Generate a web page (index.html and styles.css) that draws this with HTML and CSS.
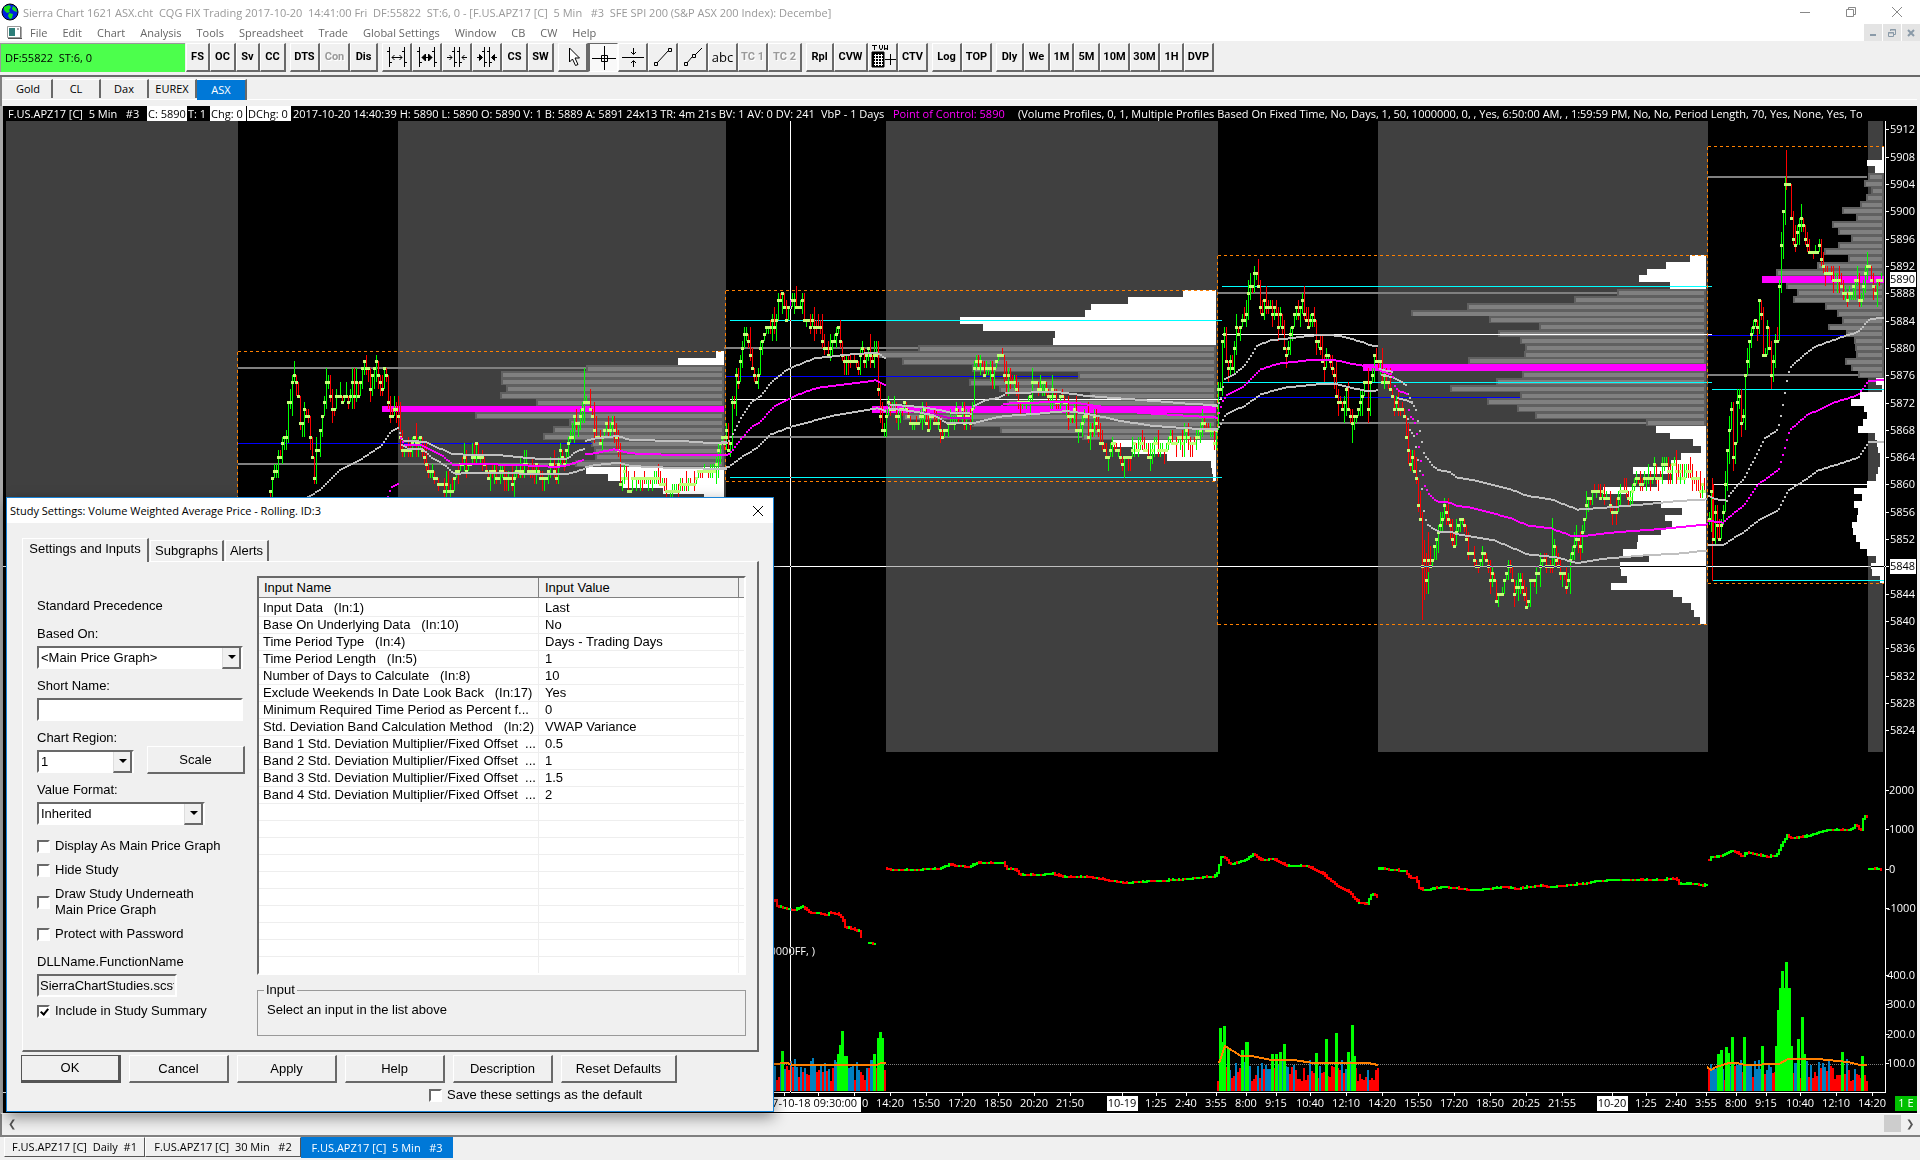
FILE: index.html
```html
<!DOCTYPE html>
<html lang="en">
<head>
<meta charset="utf-8">
<title>Sierra Chart 1621 ASX.cht</title>
<link rel="stylesheet" href="styles.css">
</head>
<body>
<header class="titlebar">
  <svg class="globe" width="18" height="18" viewBox="0 0 18 18"><circle cx="9" cy="9" r="8" fill="#0020e0" stroke="#000"/><path d="M3 4l5-2 2 2-2 3 1 2-3 1-3-3zM8 10l4 1-1 4-2 1-2-3zM12 3l3 2 1 4-3-1-2-2z" fill="#18e018"/></svg>
  <h1 class="caption">Sierra Chart 1621 ASX.cht&nbsp; CQG FIX Trading 2017-10-20&nbsp; 14:41:00 Fri&nbsp; DF:55822&nbsp; ST:6, 0 - [F.US.APZ17 [C]&nbsp; 5 Min&nbsp;&nbsp; #3&nbsp; SFE SPI 200 (S&amp;P ASX 200 Index): Decembe]</h1>
  <div class="winbtns">
    <button class="winbtn" aria-label="Minimize"><svg width="12" height="12"><path d="M1 6.5h10" stroke="#888"/></svg></button>
    <button class="winbtn" aria-label="Restore"><svg width="12" height="12" fill="none" stroke="#888"><path d="M1.500 3.500h7v7h-7zM3.500 3.500v-2h7v7h-2"/></svg></button>
    <button class="winbtn" aria-label="Close"><svg width="12" height="12" stroke="#888"><path d="M1 1l10 10M11 1L1 11"/></svg></button>
  </div>
</header>
<nav class="menubar">
  <svg width="16" height="13" viewBox="0 0 16 13"><path d="M.5 .5h13v11H.5z" fill="#fff" stroke="#999"/><path d="M2 2h6v8H2z" fill="#2c7d78"/><path d="M10 3h2M14 1v12M1 12.500h14" stroke="#555"/></svg>
  <a href="#">File</a><a href="#">Edit</a><a href="#">Chart</a><a href="#">Analysis</a><a href="#">Tools</a><a href="#">Spreadsheet</a><a href="#">Trade</a><a href="#">Global Settings</a><a href="#">Window</a><a href="#">CB</a><a href="#">CW</a><a href="#">Help</a>
  <div class="mdibtns">
    <button aria-label="Minimize chart"><svg width="10" height="10"><path d="M2 7h6" stroke="#8a9aa8" stroke-width="2"/></svg></button>
    <button aria-label="Restore chart"><svg width="10" height="10" fill="none" stroke="#8a9aa8"><path d="M1.500 4.500h5v4h-5zM1 5h6M3.500 3V1.500h5v5H7M3 2h6"/></svg></button>
    <button aria-label="Close chart"><svg width="10" height="10"><path d="M2 2l6 6M8 2l-6 6" stroke="#8a9aa8" stroke-width="2"/></svg></button>
  </div>
</nav>
<div class="toolbar">
  <div class="feed">DF:55822&nbsp; ST:6, 0</div>
  <div class="group"><button class="tb w24">FS</button><button class="tb w26">OC</button><button class="tb w24">Sv</button><button class="tb w26">CC</button></div>
  <div class="group"><button class="tb w30">DTS</button><button class="tb w30" disabled>Con</button><button class="tb w28">Dis</button></div>
  <div class="group">
    <button class="tb w30" aria-label="Widen bars"><svg width="20" height="20" fill="none" stroke="#000"><path d="M2.500 0v20M0 4.500h2M3 15.500h2M17.500 0v20M15 4.500h2M18 15.500h2M5 10.500h10M7.500 8L5 10.500 7.500 13M12.500 8l2.500 2.500-2.500 2.500"/></svg></button>
    <button class="tb w30" aria-label="Widen bars more"><svg width="20" height="20" fill="none" stroke="#000"><path d="M2.500 0v20M0 4.500h2M3 15.500h2M17.500 0v20M15 4.500h2M18 15.500h2M5 10.500h10"/><path d="M8.500 7L5 10.500 8.500 14zM11.500 7l3.500 3.500-3.500 3.500z" fill="#000"/></svg></button>
    <button class="tb w30" aria-label="Narrow bars"><svg width="20" height="20" fill="none" stroke="#000"><path d="M7.500 0v20M5 4.500h2M8 15.500h2M12.500 0v20M10 4.500h2M13 15.500h2M0 10.500h5M2.500 8L5 10.500 2.500 13M20 10.500h-5M17.500 8L15 10.500l2.500 2.500"/></svg></button>
    <button class="tb w30" aria-label="Narrow bars more"><svg width="20" height="20" fill="none" stroke="#000"><path d="M7.500 0v20M5 4.500h2M8 15.500h2M12.500 0v20M10 4.500h2M13 15.500h2M0 10.500h5M20 10.500h-5"/><path d="M2.500 7.500L5.500 10.500l-3 3zM17.500 7.500l-3 3 3 3z" fill="#000"/></svg></button>
    <button class="tb w26">CS</button><button class="tb w26">SW</button>
  </div>
  <div class="group">
    <button class="tb w30" aria-label="Pointer"><svg width="20" height="22"><path d="M6.500 2v14l3-3 3 6.500 2.500-1-3-6.500h4.500z" fill="#fff" stroke="#000"/></svg></button>
    <button class="tb w30 pressed" aria-label="Crosshair"><svg width="26" height="26" fill="none" stroke="#000"><path d="M13.500 1v24M1 13.500h24M10.500 10.500h6v6h-6z"/></svg></button>
    <button class="tb w30" aria-label="Horizontal level"><svg width="26" height="22" fill="none" stroke="#000"><path d="M2 11.500h22M13.500 2v6M11 6l2.500 2.500L16 6M13.500 21v-6M11 17l2.500-2.500L16 17"/></svg></button>
    <button class="tb w30" aria-label="Line"><svg width="20" height="20" fill="none" stroke="#000"><path d="M1.500 15.500h3v3h-3zM4 16L15 4M15.500 1.500h3v3h-3z"/></svg></button>
    <button class="tb w30" aria-label="Ray"><svg width="20" height="20" fill="none" stroke="#000"><path d="M1.500 15.500h3v3h-3zM4 16l5-6M12 8l7-7M9.500 7.500h3v3h-3z"/></svg></button>
    <button class="tb w30 plain">abc</button><button class="tb w30" disabled>TC 1</button><button class="tb w34" disabled>TC 2</button>
  </div>
  <div class="group">
    <button class="tb w28">Rpl</button><button class="tb w34">CVW</button>
    <button class="tb w30" aria-label="TVW"><svg width="26" height="26" fill="none" stroke="#000"><path d="M2 1.500h5M4.500 2v4M9.500 1v3l1.500 2 1.500-2V1M14.500 1v5l1.500-2 1.500 2V1"/><path d="M2 8h12v15H2z" fill="#000"/><path d="M4 11.500h9M4 14.500h9M4 17.500h9M4 20.500h9M5.500 10v12M8.500 10v12M11.500 10v12" stroke="#fff"/><path d="M15 15.500h11M20.500 10v11"/></svg></button>
    <button class="tb w30">CTV</button>
  </div>
  <div class="group"><button class="tb w30">Log</button><button class="tb w30">TOP</button></div>
  <div class="group"><button class="tb w28">Dly</button><button class="tb w26">We</button><button class="tb w24">1M</button><button class="tb w26">5M</button><button class="tb w30">10M</button><button class="tb w30">30M</button><button class="tb w24">1H</button><button class="tb w30">DVP</button></div>
</div>
<div class="tabs">
  <button class="tab">Gold</button><button class="tab">CL</button><button class="tab">Dax</button><button class="tab">EUREX</button><button class="tab on">ASX</button>
</div>
<main class="chartwin">
  <div class="info">
    <span class="i-sym">F.US.APZ17 [C]&nbsp; 5 Min&nbsp;&nbsp; #3</span><span class="i-c inv">C: 5890</span><span class="i-t">T: 1</span><span class="i-chg inv">Chg: 0</span><span class="i-dchg inv">DChg: 0</span><span class="i-bar">2017-10-20 14:40:39 H: 5890 L: 5890 O: 5890 V: 1 B: 5889 A: 5891 24x13 TR: 4m 21s BV: 1 AV: 0 DV: 241</span><span class="i-vbp">VbP - 1 Days</span><span class="i-poc">Point of Control: 5890</span><span class="i-rest">(Volume Profiles, 0, 1, Multiple Profiles Based On Fixed Time, No, Days, 1, 50, 1000000, 0, , Yes, 6:50:00 AM, , 1:59:59 PM, No, No, Period Length, 70, Yes, None, Yes, To</span>
  </div>
  <svg class="chart" id="chart" viewBox="3 121 1914 992" preserveAspectRatio="xMinYMin meet"></svg>
</main>
<div class="scroll"><span>&#10094;</span><i></i><span>&#10095;</span></div>
<footer class="books">
  <button class="book">F.US.APZ17 [C]&nbsp; Daily&nbsp; #1</button><button class="book">F.US.APZ17 [C]&nbsp; 30 Min&nbsp;&nbsp; #2</button><button class="book on">F.US.APZ17 [C]&nbsp; 5 Min&nbsp;&nbsp; #3</button>
</footer>

<section class="dialog" role="dialog" aria-labelledby="dlg-title">
  <div class="dlg-head"><h2 id="dlg-title">Study Settings: Volume Weighted Average Price - Rolling. ID:3</h2>
    <button class="winbtn" aria-label="Close dialog"><svg width="12" height="12" stroke="#000"><path d="M1 1l10 10M11 1L1 11"/></svg></button></div>
  <div class="dlg-tabs"><button class="dtab on">Settings and Inputs</button><button class="dtab">Subgraphs</button><button class="dtab">Alerts</button></div>
  <div class="pane">
    <form class="left">
      <p class="line first">Standard Precedence</p>
      <label class="line" for="based">Based On:</label>
      <div class="pick w206"><select id="based"><option>&lt;Main Price Graph&gt;</option></select></div>
      <label class="line" for="short">Short Name:</label>
      <input class="text w206" id="short" type="text">
      <label class="line" for="region">Chart Region:</label>
      <div class="duo"><div class="pick w97"><select id="region"><option>1</option></select></div><button type="button" class="btn scale">Scale</button></div>
      <label class="line" for="format">Value Format:</label>
      <div class="pick w168"><select id="format"><option>Inherited</option></select></div>
      <div class="checks">
        <label><input type="checkbox">Display As Main Price Graph</label>
        <label><input type="checkbox">Hide Study</label>
        <label><input type="checkbox"><span>Draw Study Underneath<br>Main Price Graph</span></label>
        <label><input type="checkbox">Protect with Password</label>
      </div>
      <label class="line dll" for="dll">DLLName.FunctionName</label>
      <input class="text w140 ro" id="dll" type="text" readonly value="SierraChartStudies.scsf">
      <label class="incl"><input type="checkbox" checked>Include in Study Summary</label>
    </form>
    <div class="right">
      <div class="list">
        <table>
          <colgroup><col class="c1"><col class="c2"><col></colgroup>
          <thead><tr><th>Input Name</th><th>Input Value</th><th></th></tr></thead>
          <tbody>
            <tr><td>Input Data&nbsp;&nbsp; (In:1)</td><td>Last</td><td></td></tr>
            <tr><td>Base On Underlying Data&nbsp;&nbsp; (In:10)</td><td>No</td><td></td></tr>
            <tr><td>Time Period Type&nbsp;&nbsp; (In:4)</td><td>Days - Trading Days</td><td></td></tr>
            <tr><td>Time Period Length&nbsp;&nbsp; (In:5)</td><td>1</td><td></td></tr>
            <tr><td>Number of Days to Calculate&nbsp;&nbsp; (In:8)</td><td>10</td><td></td></tr>
            <tr><td>Exclude Weekends In Date Look Back&nbsp;&nbsp; (In:17)</td><td>Yes</td><td></td></tr>
            <tr><td>Minimum Required Time Period as Percent f...</td><td>0</td><td></td></tr>
            <tr><td>Std. Deviation Band Calculation Method&nbsp;&nbsp; (In:2)</td><td>VWAP Variance</td><td></td></tr>
            <tr><td>Band 1 Std. Deviation Multiplier/Fixed Offset&nbsp; ...</td><td>0.5</td><td></td></tr>
            <tr><td>Band 2 Std. Deviation Multiplier/Fixed Offset&nbsp; ...</td><td>1</td><td></td></tr>
            <tr><td>Band 3 Std. Deviation Multiplier/Fixed Offset&nbsp; ...</td><td>1.5</td><td></td></tr>
            <tr><td>Band 4 Std. Deviation Multiplier/Fixed Offset&nbsp; ...</td><td>2</td><td></td></tr>
            <tr><td></td><td></td><td></td></tr><tr><td></td><td></td><td></td></tr><tr><td></td><td></td><td></td></tr><tr><td></td><td></td><td></td></tr><tr><td></td><td></td><td></td></tr>
            <tr><td></td><td></td><td></td></tr><tr><td></td><td></td><td></td></tr><tr><td></td><td></td><td></td></tr><tr><td></td><td></td><td></td></tr><tr><td></td><td></td><td></td></tr>
          </tbody>
        </table>
      </div>
      <fieldset><legend>Input</legend>Select an input in the list above</fieldset>
    </div>
  </div>
  <div class="actions"><button class="btn ok">OK</button><button class="btn">Cancel</button><button class="btn">Apply</button><button class="btn">Help</button><button class="btn">Description</button><button class="btn wide">Reset Defaults</button></div>
  <label class="save"><input type="checkbox">Save these settings as the default</label>
</section>
<script src="chart.js"></script>
</body>
</html>
```
FILE: styles.css
```css
* { box-sizing: border-box; }
body {
  margin: 0;
  height: 100vh;
  display: flex;
  flex-direction: column;
  overflow: hidden;
  background: #f0f0f0;
  color: #000;
  font: 11px/15px "Open Sans", "Noto Sans", sans-serif;
}
button, input, select { font: inherit; color: inherit; margin: 0; }
button { padding: 0; border: 0; background: none; }
h1, h2, p { margin: 0; font: inherit; }

.titlebar {
  flex: none;
  height: 24px;
  display: flex;
  align-items: center;
  gap: 4px;
  padding-left: 1px;
  background: #fff;
  color: #999;
}
.caption { white-space: nowrap; }
.winbtns { margin-left: auto; display: flex; }
.winbtn { width: 46px; height: 22px; }
.winbtns .winbtn svg, .dlg-head svg { display: block; margin: auto; }

.menubar {
  flex: none;
  height: 17px;
  display: flex;
  align-items: center;
  gap: 15px;
  padding-left: 7px;
  background: #fff;
  color: #666;
}
.menubar > svg { margin-right: -8px; }
.menubar a { color: inherit; text-decoration: none; white-space: nowrap; }
.mdibtns { margin-left: auto; display: flex; gap: 1px; }
.mdibtns button { width: 18px; height: 17px; background: #e4e4e4; }
.mdibtns svg { display: block; margin: auto; }

.toolbar {
  flex: none;
  height: 36px;
  display: flex;
  gap: 4px;
  padding-top: 2px;
  border-bottom: 2px solid #696969;
}
.feed {
  width: 185px;
  height: 29px;
  padding-left: 4px;
  margin-right: -3px;
  background: #4cff4c;
  border-top: 1px solid #999;
  border-left: 1px solid #999;
  line-height: 28px;
}
.group { display: flex; }
.tb {
  height: 29px;
  border: 1px solid #fff;
  border-right: 2px solid #696969;
  border-bottom: 2px solid #696969;
  background: #f0f0f0;
  font: bold 11px/26px Roboto, sans-serif;
  white-space: nowrap;
}
.tb svg { display: block; margin: auto; }
.tb:disabled { color: #999; text-shadow: 1px 1px #fff; }
.tb.plain { font: 13px/26px "Open Sans", sans-serif; }
.tb.pressed { background: #f9f9f9; border: 1px solid #fff; border-top-color: #696969; border-left: 2px solid #696969; }
.w24 { width: 24px; }
.w26 { width: 26px; }
.w28 { width: 28px; }
.w30 { width: 30px; }
.w34 { width: 34px; }

.tabs {
  flex: none;
  height: 29px;
  display: flex;
  align-items: flex-start;
  padding: 2px 0 0 3px;
  border-left: 2px solid #808080;
  position: relative;
}
.tabs::after { content: ""; position: absolute; left: 0; right: 3px; top: 22px; border-top: 1px solid #fff; z-index: -1; }
.tab {
  width: 48px;
  height: 19px;
  line-height: 16px;
  border-top: 1px solid #fff;
  border-right: 2px solid #696969;
  background: #f0f0f0;
}
.tab.on { width: 50px; height: 21px; background: #0078d7; color: #fff; }

.chartwin {
  flex: 1;
  min-height: 0;
  display: flex;
  flex-direction: column;
  margin: 0 3px 0 0;
  border-left: 3px solid #a8a8a8;
}
.info {
  flex: none;
  height: 15px;
  display: flex;
  overflow: hidden;
  padding-left: 5px;
  background: #000;
  color: #fff;
  white-space: nowrap;
}
.info span { flex: none; }
.i-sym { width: 139px; }
.info .inv { background: #fff; color: #000; padding-left: 1px; }
.i-c { width: 40px; }
.i-t { width: 23px; padding-left: 1px; }
.i-chg { width: 36px; }
.i-dchg { width: 44px; margin-left: 1px; }
.i-bar { width: 530px; padding-left: 2px; }
.i-vbp { width: 72px; }
.i-poc { width: 125px; color: #f0f; }
.chart { display: block; flex: 1; min-height: 0; width: 100%; background: #000; }
.chart text { font: 11px "Open Sans", "Noto Sans", sans-serif; fill: #fff; }
.chart .dark { fill: #000; }
.cross { stroke: #fff; mix-blend-mode: difference; }

.scroll {
  flex: none;
  height: 22px;
  display: flex;
  align-items: center;
  justify-content: space-between;
  padding: 0 6px 3px;
  border-left: 2px solid #808080;
  border-top: 1px solid #fff;
  color: #555;
  font-size: 10px;
}
.scroll i { width: 17px; height: 17px; margin-left: auto; margin-right: 5px; background: #cdcdcd; }
.books {
  flex: none;
  height: 25px;
  display: flex;
  align-items: flex-start;
  padding-left: 4px;
  border-top: 2px solid #808080;
}
.book {
  width: 141px;
  height: 20px;
  line-height: 16px;
  border: 1px solid #fff;
  border-right: 1px solid #555;
  border-bottom: 1px solid #555;
  white-space: nowrap;
}
.book + .book { width: 156px; }
.book.on { width: 152px; height: 21px; background: #0078d7; border-color: #0078d7; color: #fff; }
.book + .book.on { width: 152px; }

.dialog {
  position: absolute;
  left: 6px;
  top: 497px;
  width: 768px;
  padding-bottom: 8px;
  border: 1px solid #1883d7;
  background: #f0f0f0;
  box-shadow: 0 5px 14px rgba(0, 0, 0, .45);
  font: 13px/16px "Liberation Sans", Arial, sans-serif;
}
.dlg-head { display: flex; justify-content: space-between; align-items: center; height: 25px; padding-left: 3px; background: #fff; }
.dlg-head h2 { font: 11px/24px "Open Sans", sans-serif; }
.dlg-head .winbtn { width: 30px; }
.dlg-tabs { display: flex; align-items: flex-end; height: 38px; padding-left: 15px; }
.dtab { height: 21px; padding: 0 4px; border-top: 1px solid #fff; border-left: 1px solid #fff; border-right: 2px solid #696969; margin-right: 1px; white-space: nowrap; }
.dtab.on { height: 24px; width: 127px; margin-bottom: -1px; padding-bottom: 3px; background: #f0f0f0; }
.pane {
  display: grid;
  grid-template-columns: 209px 489px;
  gap: 11px;
  margin: 0 14px 0 15px;
  padding: 14px 13px 14px 14px;
  border: 1px solid #fff;
  border-right: 2px solid #696969;
  border-bottom: 2px solid #696969;
}
.left { display: flex; flex-direction: column; }
.line { height: 16px; margin: 9px 0 4px; }
.line.first { margin: 22px 0 3px; }
.pick { position: relative; height: 23px; border: 2px solid #fff; border-top-color: #696969; border-left-color: #696969; background: #fff; }
.pick select { appearance: none; display: block; width: 100%; height: 19px; padding: 0 2px; border: 0; border-radius: 0; background: #fff; }
.pick::before { content: ""; position: absolute; right: 0; top: 0; width: 16px; height: 19px; background: #f0f0f0; border-right: 2px solid #696969; border-bottom: 2px solid #696969; border-left: 1px solid #ddd; pointer-events: none; }
.pick::after { content: ""; position: absolute; right: 5px; top: 7px; border: 4px solid transparent; border-top-color: #000; border-bottom: 0; pointer-events: none; }
.w206 { width: 206px; }
.w97 { width: 97px; }
.w168 { width: 168px; }
.w140 { width: 140px; }
.text { height: 23px; padding: 0 1px; border: 2px solid #fff; border-top-color: #696969; border-left-color: #696969; background: #fff; }
.text.ro { background: #f0f0f0; }
.duo { display: flex; gap: 13px; height: 23px; }
.btn { width: 100px; height: 28px; background: #f0f0f0; border: 1px solid #fff; border-right: 2px solid #696969; border-bottom: 2px solid #696969; text-align: center; }
.btn.scale { width: 98px; margin-top: -4px; }
.btn.wide { width: 116px; }
.btn.ok { border: 1px solid #555; border-right-width: 3px; border-bottom-width: 3px; }
.checks { display: flex; flex-direction: column; gap: 8px; margin-top: 13px; }
.checks label, .incl, .save { display: flex; align-items: center; gap: 5px; }
input[type="checkbox"] { appearance: none; position: relative; width: 13px; height: 13px; border: 2px solid #fff; border-top-color: #696969; border-left-color: #696969; background: #fff; }
input[type="checkbox"]:checked::after { content: ""; position: absolute; left: 3px; top: 0; width: 3px; height: 6px; border: solid #000; border-width: 0 2px 2px 0; rotate: 40deg; }
.dll { margin-top: 12px; }
.incl { margin-top: 6px; }
.right { display: flex; flex-direction: column; gap: 7px; }
.list { height: 399px; overflow: hidden; border: 2px solid #fff; border-top-color: #696969; border-left-color: #696969; background: #fff; }
table { width: 100%; table-layout: fixed; border-collapse: separate; border-spacing: 0; }
.c1 { width: 280px; }
.c2 { width: 200px; }
th { height: 20px; padding: 0 0 0 5px; text-align: left; font-weight: normal; background: #f0f0f0; border-right: 1px solid #808080; border-bottom: 1px solid #808080; }
td { height: 17px; padding: 0 0 0 4px; line-height: 16px; white-space: nowrap; overflow: hidden; border-right: 1px solid #eee; border-bottom: 1px solid #eee; }
td + td, th + th { padding-left: 6px; }
tbody tr:first-child td { height: 19px; padding-top: 2px; }
th:last-child, td:last-child { border-right: 0; padding: 0; }
fieldset { height: 54px; margin: 0; padding: 4px 9px; border: 1px solid #999; }
legend { margin-left: -3px; padding: 0 2px; line-height: 16px; }
.actions { display: flex; gap: 8px; margin: 3px 0 0 14px; }
.save { margin: 4px 0 0 422px; }
```
FILE: chart.js
```js
const NS = 'http://www.w3.org/2000/svg';
const svg = document.getElementById('chart');
const TICK = 6.83, REF = 279.5;
let seed = 7;
const rnd = () => (seed = (seed * 16807) % 2147483647) / 2147483647;

function add(tag, attrs, text) {
  const el = document.createElementNS(NS, tag);
  for (const k in attrs) el.setAttribute(k, attrs[k]);
  if (text !== undefined) el.textContent = text;
  svg.appendChild(el);
  return el;
}
const rect = (x, y, w, h, fill) => add('rect', { x, y, width: w, height: h, fill, 'shape-rendering': 'crispEdges' });
const line = (x1, y1, x2, y2, stroke, w = 1, extra = {}) =>
  add('path', { d: `M${x1} ${y1}L${x2} ${y2}`, stroke, 'stroke-width': w, 'shape-rendering': 'crispEdges', ...extra });
const path = (d, attrs) => add('path', { d, 'shape-rendering': 'crispEdges', ...attrs });

/* Turns flat "x,y x,y" samples into chart coordinates. */
function pts(v, s) {
  return s.trim().split(/\s+/).map(p => {
    const [x, y] = p.split(',').map(Number);
    return [v.x + x / v.sx, v.y + y / v.sy];
  });
}
function walk(list, fn) {
  let i = 0;
  for (let x = Math.round(list[0][0]); x <= list[list.length - 1][0]; x += 2) {
    while (i < list.length - 2 && list[i + 1][0] < x) i++;
    const [a, b] = [list[i], list[i + 1]];
    const t = Math.max(0, Math.min(1, (x - a[0]) / ((b[0] - a[0]) || 1)));
    fn(x, a[1] + (b[1] - a[1]) * t);
  }
}
const A = { x: 230, y: 330, sx: 3, sy: 3 };
const B = { x: 720, y: 270, sx: 3, sy: 3 };
const C = { x: 1210, y: 240, sx: 3, sy: 3 };
const D = { x: 1690, y: 120, sx: 2.987, sy: 2.489 };
const E = { x: 770, y: 740, sx: 2.613, sy: 2.993 };
const F = { x: 1320, y: 740, sx: 2.613, sy: 2.993 };

/* Evening sessions */
[[6, 238], [398, 726], [886, 1218], [1378, 1708], [1868, 1883]].forEach(([a, b]) => rect(a, 121, b - a, 631, '#404040'));

/* Volume profiles, one row per tick; w = outside value area, g = inside, m = point of control */
function profile(v, right, top, rows) {
  rows.split(' ').forEach((r, i) => {
    const x = Math.round(v.x + r.slice(1) / v.sx);
    const y = Math.round(top + i * TICK), h = Math.round(top + (i + 1) * TICK) - y;
    if (r[0] === 'w') rect(x, y, right - x, h, '#fff');
    if (r[0] === 'm') rect(x, y, right - x, h, '#f0f');
    if (r[0] === 'g') { rect(x, y, right - x, h, '#606060'); rect(x + 2, y + 2, right - x - 4, 4, '#808080'); }
  });
}
profile(A, 724, 351, 'w1458 w1344 g1068 g813 g813 g828 g810 g918 m456 g735 g1017 g969 g939 g1083 g1092 g1095 g1035 w1068 w1134 w1175 w1300 w1422');
profile(B, 1216, 290, 'w1390 w1224 w1113 w1095 w721 w789 w1005 w1000 g594 g470 g546 g755 g1074 g747 g837 g1110 g862 m456 g549 g755 g840 g1086 w1175 w1240 w1341 w1473 w1476 w1479');
profile(C, 1706, 255, 'w1440 w1368 w1311 w1287 w1380 g1221 g1092 g771 g603 g837 g987 g864 g930 g945 g942 g774 m459 g936 g858 g720 g930 g831 g921 g975 g1308 w1338 w1380 w1449 w1473 w1413 w1383 w1269 w1386 w1341 w1180 w1257 w1353 w1416 w1365 w1386 w1353 w1285 w1281 w1239 w1317 w1230 w1233 w1251 w1203 w1389 w1416 w1443 w1452 w1470');
profile(D, 1884, 146, 'w573 w573 w528 w552 g531 g519 g540 g525 g508 g453 g496 g423 g441 g480 g441 g399 g471 g379 g258 m216 g288 g321 g309 g402 g438 g453 g411 g465 g490 g492 g496 g462 g480 g501 w555 w573 w508 w480 w519 w528 w516 w501 w552 w558 w561 w567 w567 w561 w555 w528 w489 w513 w489 w501 w498 w483 w487 w495 w507 w530 w555 w540 w543 w567');

/* Levels */
const dash = { 'stroke-dasharray': '3 3', fill: 'none' }, OR = '#ff8000';
[[238, 586, 368], [238, 575, 464], [724, 918, 348], [724, 1082, 437], [1218, 1617, 293], [1218, 1646, 423], [1708, 1867, 177], [1708, 1858, 375]]
  .forEach(([a, b, y]) => line(a, y, b, y, '#808080', 2));
[[238, 592, 443.5], [726, 1078, 376.5], [1218, 1520, 397.5], [1708, 1848, 335.5]].forEach(([a, b, y]) => line(a, y, b, y, '#0000ff'));
[[730, 1222, 320.5], [730, 1222, 477.5], [1222, 1712, 286.5], [1222, 1712, 382.5], [1712, 1884, 389.5], [1712, 1884, 580.5]].forEach(([a, b, y]) => line(a, y, b, y, '#00ffff'));
[[730, 1222, 399.5], [1222, 1712, 334.5], [1712, 1867, 484.5]].forEach(([a, b, y]) => line(a, y, b, y, '#fff'));
[[237.5, 351.5, 724, 620], [725.5, 290.5, 1217, 481.5], [1217.5, 255.5, 1707, 624.5], [1707.5, 146.5, 1884, 583.5]].forEach(([l, t, r, b]) => {
  line(l, t, r, t, OR, 1, dash); line(l, t, l, b, OR, 1, dash); line(l, b, r, b, OR, 1, dash);
});

/* Five minute bars */
let up = '', down = '', marks = '';
function bars(v, s) {
  let prev = null;
  walk(pts(v, s), (x, y) => {
    const c = REF + Math.round((y - REF) / TICK) * TICK;
    const o = prev === null ? c : prev;
    const hi = Math.min(c, o) - Math.floor(rnd() * 2.3) * TICK;
    const lo = Math.max(c, o) + Math.floor(rnd() * 2.4) * TICK;
    const d = `M${x + .5} ${Math.round(hi)}V${Math.round(lo)}`;
    if (c < o || (c === o && rnd() > .5)) up += d; else down += d;
    marks += `M${x - 1} ${Math.round(c) - 1}h3v3h-3z`;
    prev = c;
  });
}
bars(A, '121,490 127,440 130,405 136,440 145,380 150,380 157,340 163,322 168,322 172,217 178,240 187,155 196,135 200,180 206,200 208,280 214,300 220,217 228,260 238,260 242,360 247,385 250,462 258,362 264,362 268,322 278,240 284,200 291,135 297,180 303,217 309,260 318,200 327,180 333,217 339,200 351,200 357,217 366,155 372,200 378,155 384,200 392,135 401,95 408,117 413,95 417,200 424,135 432,117 436,95 441,117 450,160 455,180 463,117 470,135 475,240 482,260 490,240 500,240 504,262 510,320 516,362 524,362 530,350 540,362 553,322 560,340 570,322 575,362 582,382 590,405 597,424 606,424 615,445 622,462 632,462 640,484 648,465 652,484 668,484 674,424 682,424 690,405 702,382 708,424 716,405 726,382 732,382 736,340 741,362 745,382 755,382 762,405 775,440 785,424 800,440 812,424 825,440 840,440 850,462 858,424 875,424 885,405 905,424 920,405 930,440 950,440 963,382 970,405 980,440 990,362 1000,400 1010,362 1018,300 1024,340 1030,260 1042,280 1050,260 1060,215 1064,200 1072,217 1080,240 1085,260 1093,300 1100,322 1110,340 1118,322 1124,300 1130,280 1136,300 1148,280 1156,322 1163,340 1167,462 1176,440 1180,424 1187,440 1193,484 1200,484 1208,440 1280,440 1290,462 1305,462 1310,484 1340,484 1355,462 1395,462 1402,424 1450,424 1458,405 1465,360 1475,322 1484,322 1488,300');
bars(B, '5,500 15,530 20,480 28,605 34,380 40,440 46,295 50,355 56,337 62,240 70,215 76,172 84,215 90,257 97,295 105,340 112,340 118,255 124,215 130,215 134,152 148,193 152,152 166,172 172,92 182,92 186,70 192,120 196,152 204,112 214,112 220,70 226,112 240,112 246,92 250,152 262,152 268,172 276,152 288,172 303,172 308,235 315,215 322,257 328,235 334,215 346,215 352,175 358,193 362,240 370,275 405,275 415,295 424,235 434,275 442,235 450,255 455,275 463,255 470,257 476,420 482,460 488,480 492,480 497,440 504,398 515,420 535,440 550,398 562,420 567,460 590,460 600,440 612,420 622,480 630,440 645,460 655,460 664,503 674,480 682,460 700,460 708,420 716,440 725,420 733,460 742,420 748,460 755,440 760,318 766,275 775,295 784,275 790,318 804,295 818,318 826,275 838,257 846,257 851,295 856,360 862,318 872,337 885,337 888,360 895,398 928,398 935,337 944,337 955,360 965,337 975,337 985,380 1000,360 1008,398 1018,380 1028,380 1036,398 1046,440 1064,420 1070,503 1076,480 1088,460 1095,420 1104,500 1114,480 1124,440 1132,480 1142,520 1152,540 1160,562 1170,540 1180,520 1195,540 1202,583 1210,562 1230,562 1240,520 1255,540 1262,520 1280,540 1287,562 1295,540 1305,520 1312,540 1340,540 1352,503 1360,520 1378,503 1385,520 1395,480 1405,503 1415,520 1435,503 1448,460 1460,480 1475,480 1485,540');
bars(C, '5,570 12,610 20,560 25,430 30,450 34,347 40,243 46,347 52,403 58,347 68,385 76,262 84,282 92,242 105,242 110,222 116,120 124,160 129,100 135,80 142,118 150,202 156,222 160,182 166,202 180,202 186,222 196,202 202,283 210,222 215,262 220,304 227,345 234,325 240,283 248,242 256,182 262,242 267,202 276,182 282,222 290,242 298,262 304,222 312,242 320,325 327,304 334,345 342,385 352,325 362,385 372,405 380,487 390,487 397,508 402,487 408,450 415,508 422,550 430,528 438,528 446,508 455,470 462,428 468,428 474,508 478,428 485,428 490,347 498,365 510,365 515,428 522,405 532,428 538,450 545,450 549,508 556,487 562,508 580,508 586,550 590,610 594,632 598,692 604,652 610,673 617,713 622,754 628,855 632,835 636,980 642,960 646,1042 652,958 660,980 664,980 670,920 676,898 682,878 690,855 697,835 703,798 710,818 716,835 722,857 730,940 740,857 756,835 763,857 770,920 778,940 784,920 790,960 800,980 806,980 814,940 820,940 827,960 834,980 840,1020 850,1000 857,1082 864,1062 875,1062 882,1020 890,980 900,980 906,1020 912,1062 918,1042 930,1020 940,1042 946,1103 954,1080 958,1020 972,1020 980,1000 990,980 1000,960 1010,980 1026,980 1030,898 1036,960 1044,980 1050,1000 1062,1000 1070,1042 1078,980 1084,940 1092,920 1100,898 1110,920 1120,857 1128,795 1136,775 1150,754 1162,754 1168,775 1176,754 1186,775 1196,775 1208,818 1216,818 1224,775 1232,754 1248,754 1257,775 1266,754 1274,734 1282,692 1290,734 1302,713 1326,713 1332,673 1338,713 1350,713 1354,673 1370,673 1378,692 1384,673 1396,673 1404,713 1410,692 1418,713 1432,692 1455,713 1462,692 1468,754 1478,734 1485,754');
bars(D, '57,1000 58,907 64,925 69,1045 74,978 80,1010 84,1010 89,1078 94,990 100,960 106,880 112,805 118,755 124,703 128,838 133,820 138,738 142,670 148,703 154,772 160,720 166,600 170,602 176,550 183,535 188,516 195,500 200,516 207,432 214,500 220,636 226,550 232,500 238,600 245,652 252,535 258,600 262,500 268,364 274,280 279,212 286,143 290,160 297,160 300,228 306,280 313,312 318,295 322,262 330,245 336,245 342,278 348,312 354,330 378,330 384,295 388,347 394,347 400,382 406,364 413,397 420,364 424,397 446,397 454,414 460,432 467,448 474,432 485,432 490,382 496,414 502,382 507,485 514,432 520,382 528,364 535,364 540,397 548,414 556,432 560,382 568,397 574,397');
/* Long wicks of single bars */
up += 'M584.5 368V400M1552.5 518V566M1352.5 410V443';
down += 'M1422.5 560V620M1424.5 540V600M1428.5 532V572M1786.500 150V190M1712.500 478V581';
path(up, { stroke: '#00ff00' });
path(down, { stroke: '#ff0000' });

/* Rolling VWAP and its bands */
function dots(v, color, s) {
  let d = '';
  walk(pts(v, s), (x, y) => { d += `M${x} ${Math.round(y)}h2v2h-2z`; });
  path(d, { fill: color });
}
const G = '#c0c0c0', M = '#ff00ff';
path(marks, { fill: '#c0ff78' });
dots(A, G, '230,500 270,475 330,415 390,385 450,345 480,303 502,290 515,330 580,332 610,345 665,370 800,372 900,382 990,385 1010,383 1030,365 1060,353');
dots(A, G, '1064,330 1085,323 1160,315 1200,327 1350,330 1450,337 1485,333');
dots(A, M, '470,500 482,468 502,458');
dots(A, M, '510,320 520,343 575,343 640,378 665,402 720,398 880,403 980,408 1010,403 1060,385');
dots(A, M, '1064,370 1090,367 1150,355 1200,367 1350,373 1485,373');
dots(A, G, '512,340 530,353 575,355 600,378 645,405 670,428 780,425 950,430 1010,428 1060,415');
dots(A, G, '1064,408 1090,403 1160,395 1200,405 1350,412 1485,413');
dots(B, G, '0,515 22,515 40,480 60,440 90,395 120,375 150,335 200,295 280,262 390,250 470,245 496,265');
dots(B, M, '0,553 25,550 60,505 90,470 115,455 160,407 220,375 290,350 400,337 465,328 496,345');
dots(B, G, '0,592 25,587 60,560 110,530 150,490 210,468 330,435 470,412 496,420');
dots(B, G, '504,400 600,408 660,418 690,425 755,428');
dots(B, G, '760,405 790,388 835,380 855,367 1000,362 1100,375 1300,390 1400,398 1490,403');
dots(B, '#c800c8', '560,420 640,430 680,440 750,440');
dots(B, M, '760,420 840,410 850,398 1000,393 1060,395 1150,408 1250,425 1490,440');
dots(B, G, '504,412 570,420 640,433 680,457 755,457 800,445 850,435 950,428 1040,420 1120,432 1200,450 1300,465 1400,472 1490,475');
dots(C, G, '0,492 20,497 30,470 40,415 70,400 100,375 140,313 180,298 250,290 330,281 390,285 450,302 485,315 502,315');
dots(C, M, '0,527 20,530 35,480 45,465 100,435 150,385 200,368 300,357 370,357 430,370 480,378 502,378');
dots(C, G, '0,565 20,567 45,520 100,495 150,460 220,440 340,428 380,430 430,443 470,450 502,448');
dots(C, G, '508,385 545,393');
dots(C, G, '512,402 550,410 586,432 590,458 615,508 640,640 660,668 680,687 715,693 740,710 800,720 900,745 950,765 1020,775 1100,806 1180,800 1300,790 1400,780 1490,775');
dots(C, M, '510,390 545,402 550,433 560,448 588,458 592,495 598,528 610,535 620,590 640,730 655,762 680,782 715,785 740,795 780,800 840,815 900,832 950,853 1020,862 1080,884 1130,884 1200,875 1350,864 1490,850');
dots(C, G, '560,472 592,480 608,488');
dots(C, G, '590,530 598,572 610,585 620,650 628,695 635,765 640,822 650,850 670,865 690,873 720,873 740,880 850,898 950,940 1030,948 1100,966 1180,953 1300,943 1400,938 1490,928');
dots(D, G, '55,933 80,943 108,945 115,930 160,888 190,840 220,790 260,768 270,730 285,655 295,615 330,588 370,562 450,538 500,525 535,492 575,491');
dots(D, M, '55,995 95,1000 115,985 160,955 200,905 262,868 275,830 295,770 345,733 430,700 500,682 530,647 575,645');
dots(D, G, '55,1055 98,1055 115,1045 160,1022 200,995 262,968 290,920 330,900 380,870 500,838 530,800 575,798');

/* Cumulative delta */
function delta(v, s) {
  let g = '', r = '', prev = null;
  walk(pts(v, s), (x, y) => {
    y = Math.round(y) - 1;
    const o = prev === null ? y : prev;
    const d = `M${x} ${Math.min(y, o) - (rnd() > .8 ? 1 : 0)}h2V${Math.max(y, o) + 2}h-2z`;
    if (y < o || (y === o && rnd() > .45)) g += d; else r += d;
    prev = y;
  });
  path(g, { fill: '#00ff00' }); path(r, { fill: '#ff0000' });
}
delta(E, '10,480 15,497 40,505 60,510 80,498 105,518 125,518 145,525 150,518 175,520 187,535 192,560 230,572 240,608');
delta(E, '255,608 272,610');
delta(E, '303,385 320,390 440,386 463,374 520,380 540,368 608,368 615,385 640,388 650,404 735,402 765,410 830,410 880,420 925,428 1000,422 1050,420 1160,408 1167,395 1175,350 1185,350 1200,372 1240,360 1260,340 1280,360 1310,356 1350,378 1400,378 1440,400 1480,437 1510,455 1535,488 1560,488');
delta(F, '98,488 120,490 130,465 138,460 150,473');
delta(F, '152,385 222,393 228,410 248,415 257,445 270,450 320,440 400,450 480,440 510,446 570,436 600,440 690,430 720,421 930,417 935,430 985,432 995,436 1012,434');
delta(F, '1014,358 1018,350 1045,348 1075,330 1100,348 1115,336 1165,350 1190,345 1200,320 1218,285 1230,295 1270,288 1320,270 1380,270 1400,255 1410,275 1418,225 1428,230');
delta(F, '1432,385 1468,388');

/* Volume */
const BASE = 1091;
line(774, 1064.5, 1884, 1064.5, '#808080', 1, { 'stroke-dasharray': '1 1' });
function volume(from, to, redFrom, peaks) {
  for (let x = from; x < to; x += 2) {
    const low = rnd() < (x > redFrom ? .75 : .4);
    const h = low ? 10 + rnd() * 15 : 21 + rnd() * 12;
    rect(x, Math.round(BASE - h), 2, Math.round(h), low ? '#ff0000' : '#0080c0');
  }
  peaks.forEach(([x, top, w = 3]) => rect(x, top, w, BASE - top, '#00ff00'));
}
volume(774, 886, 900, [[781, 1051], [837, 1054], [839, 1045], [841, 1031], [844, 1056, 4], [873, 1054], [877, 1038], [879, 1032], [881, 1038]]);
volume(1217, 1378, 1288, [[1219, 1028], [1221, 1042, 5], [1223, 1026], [1227, 1049], [1241, 1050], [1245, 1042, 4], [1271, 1054], [1275, 1054], [1279, 1052], [1283, 1044], [1315, 1053], [1325, 1039], [1335, 1033], [1347, 1052], [1351, 1025], [1353, 1056]]);
volume(1708, 1868, 1826, [[1717, 1054], [1720, 1050], [1725, 1047], [1727, 1053], [1731, 1037], [1743, 1037], [1761, 1046], [1775, 1046, 18], [1777, 1010], [1779, 988, 12], [1781, 971], [1785, 962], [1787, 1027, 4], [1797, 1039], [1801, 1017], [1803, 1054], [1841, 1052], [1861, 1056]]);
function avg(v, s) { path('M' + pts(v, s).map(p => p.map(n => Math.round(n)).join(' ')).join('L'), { stroke: OR, fill: 'none', 'stroke-width': 2 }); }
avg(E, '10,969 45,968 60,972 160,972 200,973 240,972 280,973 290,968 303,968');
avg(E, '1172,968 1188,915 1210,932 1230,947 1260,947 1310,957 1370,957 1420,968 1568,968');
avg(F, '0,968 125,968 152,973');
avg(F, '1012,980 1022,988 1035,980 1070,968 1090,968 1110,974 1200,971 1222,955 1300,955 1380,963 1410,972 1430,972');

/* Axes */
line(1885.5, 106, 1885.5, 1093, '#fff');
line(3, 1092.5, 1886, 1092.5, '#fff');
for (let p = 5912, i = 0; p >= 5824; p -= 4, i++) {
  const y = Math.round(129.3 + i * 4 * TICK);
  line(1886, y + .5, 1889, y + .5, '#fff');
  add('text', { x: 1890, y: y + 4 }, p);
}
[[5890, 279], [5848, 566]].forEach(([p, y]) => { rect(1890, y - 7, 26, 15, '#fff'); add('text', { x: 1890, y: y + 4, class: 'dark' }, p); });
[['2000', 790], ['1000', 829], ['0', 869], ['-1000', 908], ['400.0', 975], ['300.0', 1004], ['200.0', 1034], ['100.0', 1063]].forEach(([t, y]) => {
  line(1886, y + .5, 1889, y + .5, '#fff');
  add('text', { x: t.length > 4 ? 1887 : 1889, y: y + 4 }, t);
});
[[784, ''], [818, ''], [854, ''], [890, '14:20'], [926, '15:50'], [962, '17:20'], [998, '18:50'], [1034, '20:20'], [1070, '21:50'], [1122, '10-19', 1], [1156, '1:25'], [1186, '2:40'], [1216, '3:55'], [1246, '8:00'], [1276, '9:15'], [1310, '10:40'], [1346, '12:10'], [1382, '14:20'], [1418, '15:50'], [1454, '17:20'], [1490, '18:50'], [1526, '20:25'], [1562, '21:55'], [1612, '10-20', 1], [1646, '1:25'], [1676, '2:40'], [1706, '3:55'], [1736, '8:00'], [1766, '9:15'], [1800, '10:40'], [1836, '12:10'], [1872, '14:20']].forEach(([x, t, day]) => {
  line(x + .5, 1093, x + .5, 1096, '#fff');
  if (day) rect(x - 15, 1096, 31, 15, '#fff');
  if (t) add('text', { x, y: 1107, 'text-anchor': 'middle', class: day ? 'dark' : '' }, t);
});
rect(760, 1097, 101, 15, '#fff');
add('text', { x: 857, y: 1107, 'text-anchor': 'end', class: 'dark' }, '2017-10-18  09:30:00');
add('text', { x: 862, y: 1107 }, '0');
rect(1895, 1096, 22, 15, '#00c000');
add('text', { x: 1906, y: 1107, 'text-anchor': 'middle' }, '1 E');
add('text', { x: 815, y: 955, 'text-anchor': 'end' }, '0000FF, )');

/* Crosshair */
line(3, 566.5, 1886, 566.5, '#fff', 1, { class: 'cross' });
line(790.5, 106, 790.5, 1093, '#fff', 1, { class: 'cross' });
```
